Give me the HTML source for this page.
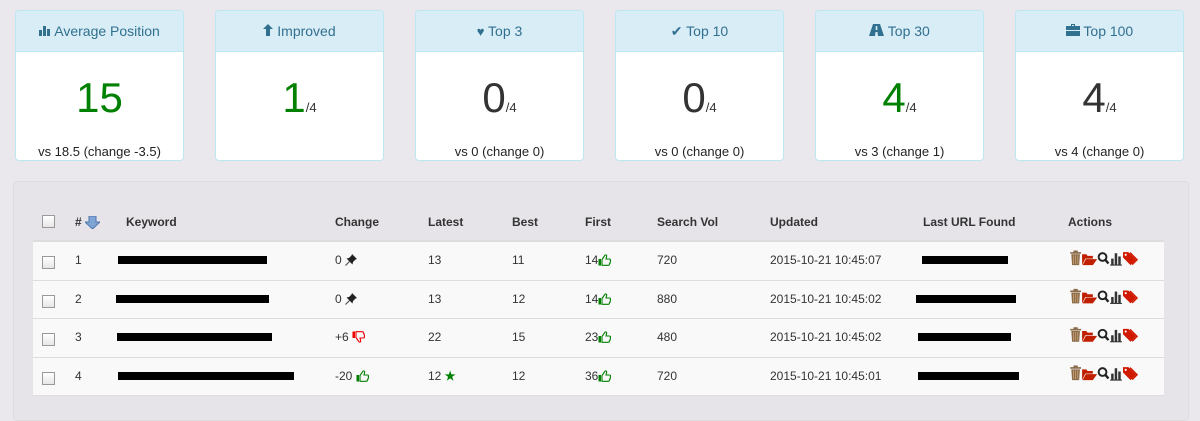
<!DOCTYPE html>
<html><head><meta charset="utf-8"><style>
*{box-sizing:border-box;margin:0;padding:0}
body{width:1200px;height:406px;overflow:hidden;background:#ebe8ed;font-family:"Liberation Sans",sans-serif;position:relative;color:#333}
.card{position:absolute;top:10px;width:169px;height:151px;background:#fff;border:1px solid #bce8f1;border-radius:4px;overflow:hidden}
.card .h{height:41px;background:#d9edf7;border-bottom:1px solid #bce8f1;color:#31708f;font-size:14px;text-align:center;line-height:40px}
.card .n{position:absolute;top:62px;left:0;right:0;text-align:center;font-size:42px;line-height:50px}
.card .n small{font-size:13px;color:#333}
.card .v{position:absolute;top:133px;left:0;right:0;text-align:center;font-size:13px;color:#222}
.g{color:#008000}
.panel{position:absolute;left:13px;top:181px;width:1176px;height:240px;background:#e6e4e9;border:1px solid #ddd;border-radius:4px}
.th{position:absolute;top:215px;font-size:12px;font-weight:bold;color:#333}
.tbl{position:absolute;left:33px;top:240px;width:1131px;border-top:2px solid #ddd}
.row{height:38.5px;background:#f9f9f9;border-bottom:1px solid #ddd;position:relative;font-size:12px}
.row span{position:absolute;top:11px;white-space:nowrap}
.cb{position:absolute;width:13px;height:13px;border:1px solid #999;background:linear-gradient(#fff,#e6e6e6)}
.bar{position:absolute;height:8px;background:#000;top:14px}
.ic{display:inline-block;vertical-align:-2px}
</style></head><body>
<svg width="0" height="0" style="position:absolute">
<defs>
<symbol id="pin" viewBox="0 0 12 12"><path d="M7 0L12 5L10.5 5.5L8 8L7.5 10.5L1.5 4.5L4 4L6.5 1.5Z" fill="#222"/><path d="M4.5 7.5L0.5 11.5" stroke="#555" stroke-width="1.2"/></symbol>
<symbol id="up" viewBox="0 0 13 12"><rect x="0.5" y="5" width="2.5" height="6.5" fill="#008000"/><path d="M4 5.5L7 1.2C8 0.5 9 1 8.6 2.5L8 5H11.5C12.5 5 12.8 6 12.3 6.6C12.8 7.2 12.5 8 12 8.3C12.3 9 12 9.6 11.4 9.8C11.6 10.6 11 11.3 10.2 11.3H4Z" fill="none" stroke="#008000" stroke-width="1.1"/></symbol>
<symbol id="down" viewBox="0 0 13 12"><rect x="0.5" y="0.5" width="2.5" height="6.5" fill="#e00"/><path d="M4 6.5L7 10.8C8 11.5 9 11 8.6 9.5L8 7H11.5C12.5 7 12.8 6 12.3 5.4C12.8 4.8 12.5 4 12 3.7C12.3 3 12 2.4 11.4 2.2C11.6 1.4 11 0.7 10.2 0.7H4Z" fill="none" stroke="#e00" stroke-width="1.1"/></symbol>
</defs></svg>

<div class="card" style="left:15px"><div class="h"><svg width="12" height="11" viewBox="0 0 12 11" fill="#31708f"><rect x="0" y="5" width="3" height="6"/><rect x="4" y="1" width="3" height="10"/><rect x="8" y="4" width="3" height="7"/></svg> Average Position</div><div class="n g">15</div><div class="v">vs 18.5 (change -3.5)</div></div>
<div class="card" style="left:215px"><div class="h"><svg width="10" height="12" viewBox="0 0 10 12" fill="#31708f"><path d="M5 0L10 5H7V12H3V5H0Z"/></svg> Improved</div><div class="n"><span class="g">1</span><small>/4</small></div></div>
<div class="card" style="left:415px"><div class="h"><span style="font-size:13px">♥</span> Top 3</div><div class="n">0<small>/4</small></div><div class="v">vs 0 (change 0)</div></div>
<div class="card" style="left:615px"><div class="h"><span>✔</span> Top 10</div><div class="n">0<small>/4</small></div><div class="v">vs 0 (change 0)</div></div>
<div class="card" style="left:815px"><div class="h"><svg width="15" height="12" viewBox="0 0 15 12" fill="#31708f"><path d="M4 0H11L15 12H9L8.5 8H6.5L6 12H0ZM6.8 2L6.6 6H8.4L8.2 2Z"/></svg> Top 30</div><div class="n"><span class="g">4</span><small>/4</small></div><div class="v">vs 3 (change 1)</div></div>
<div class="card" style="left:1015px"><div class="h"><svg width="14" height="12" viewBox="0 0 14 12" fill="#31708f"><path d="M5 0H9V2H14V6H0V2H5ZM6 1V2H8V1ZM0 7H14V12H0Z"/></svg> Top 100</div><div class="n">4<small>/4</small></div><div class="v">vs 4 (change 0)</div></div>

<div class="panel"></div>
<div class="cb" style="left:42px;top:215px"></div>
<div class="th" style="left:75px">#</div>
<svg style="position:absolute;left:85px;top:216px" width="15" height="13" viewBox="0 0 15 13"><path d="M4 0H11V6H15L7.5 13L0 6H4Z" fill="#7fa4d6" stroke="#4f74a8"/></svg>
<div class="th" style="left:126px">Keyword</div>
<div class="th" style="left:335px">Change</div>
<div class="th" style="left:428px">Latest</div>
<div class="th" style="left:512px">Best</div>
<div class="th" style="left:585px">First</div>
<div class="th" style="left:657px">Search Vol</div>
<div class="th" style="left:770px">Updated</div>
<div class="th" style="left:923px">Last URL Found</div>
<div class="th" style="left:1068px">Actions</div>

<div class="tbl">
<div class="row"><div class="cb" style="left:9px;top:14px"></div><span style="left:42px">1</span><div class="bar" style="left:85px;width:149px"></div><span style="left:302px">0 <svg class="ic" width="12" height="12"><use href="#pin"/></svg></span><span style="left:395px">13</span><span style="left:479px">11</span><span style="left:552px">14<svg class="ic" width="13" height="12"><use href="#up"/></svg></span><span style="left:624px">720</span><span style="left:737px">2015-10-21 10:45:07</span><div class="bar" style="left:889px;width:86px"></div></div>
<div class="row"><div class="cb" style="left:9px;top:14px"></div><span style="left:42px">2</span><div class="bar" style="left:83px;width:153px"></div><span style="left:302px">0 <svg class="ic" width="12" height="12"><use href="#pin"/></svg></span><span style="left:395px">13</span><span style="left:479px">12</span><span style="left:552px">14<svg class="ic" width="13" height="12"><use href="#up"/></svg></span><span style="left:624px">880</span><span style="left:737px">2015-10-21 10:45:02</span><div class="bar" style="left:883px;width:100px"></div></div>
<div class="row"><div class="cb" style="left:9px;top:14px"></div><span style="left:42px">3</span><div class="bar" style="left:84px;width:155px"></div><span style="left:302px">+6 <svg class="ic" width="13" height="12"><use href="#down"/></svg></span><span style="left:395px">22</span><span style="left:479px">15</span><span style="left:552px">23<svg class="ic" width="13" height="12"><use href="#up"/></svg></span><span style="left:624px">480</span><span style="left:737px">2015-10-21 10:45:02</span><div class="bar" style="left:885px;width:93px"></div></div>
<div class="row"><div class="cb" style="left:9px;top:14px"></div><span style="left:42px">4</span><div class="bar" style="left:85px;width:176px"></div><span style="left:302px">-20 <svg class="ic" width="13" height="12"><use href="#up"/></svg></span><span style="left:395px">12 <b class="g">★</b></span><span style="left:479px">12</span><span style="left:552px">36<svg class="ic" width="13" height="12"><use href="#up"/></svg></span><span style="left:624px">720</span><span style="left:737px">2015-10-21 10:45:01</span><div class="bar" style="left:885px;width:101px"></div></div>
</div>

<svg style="position:absolute;left:1069px;top:250px" width="80" height="140" viewBox="0 0 74 130">
<defs><g id="a">
<path d="M1 2H11V3.5H1ZM4 0.5H8V2H4ZM2 4H10L9.3 14H2.7Z" fill="#8a6b4a"/><path d="M4 5V13M6 5V13M8 5V13" stroke="#c9a070" stroke-width="0.8"/>
<path d="M12 4H16L17 5.5H22V8H15L12 14ZM15.5 8.5H26L22 14H12.5Z" fill="#c02000"/>
<circle cx="31" cy="6.5" r="3.6" fill="none" stroke="#222" stroke-width="1.8"/><path d="M33.5 9L36.5 12.5" stroke="#222" stroke-width="2.2"/>
<rect x="39" y="8" width="2.3" height="6" fill="#333"/><rect x="42.3" y="3" width="2.3" height="11" fill="#333"/><rect x="45.6" y="6" width="2.3" height="8" fill="#333"/><rect x="38" y="13.5" width="11" height="1" fill="#333"/>
<path d="M50 2V7L57 14L62 9L55 2Z" fill="#d01a00"/><path d="M57 2L64 9L59 14L58 13L62 9L56 3Z" fill="#d01a00"/><circle cx="52.5" cy="4.5" r="1" fill="#fff"/>
</g></defs>
<use href="#a" y="0"/><use href="#a" y="35.6"/><use href="#a" y="71.2"/><use href="#a" y="106.8"/>
</svg>
</body></html>
